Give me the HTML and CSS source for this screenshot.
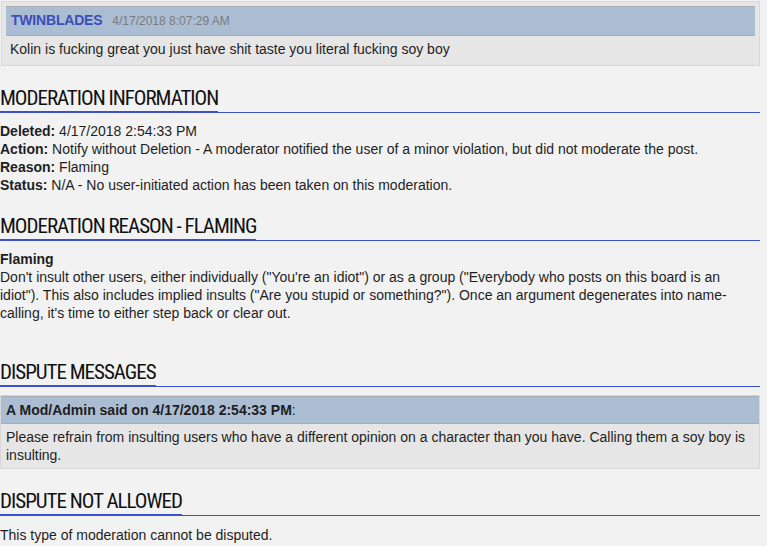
FILE: index.html
```html
<!DOCTYPE html>
<html lang="en">
<head>
<meta charset="utf-8">
<title>Moderation</title>
<link rel="stylesheet" href="styles.css">
</head>
<body>
<div class="page">
  <div class="post">
    <div class="post-head">
      <span class="post-user">TWINBLADES</span><span class="post-date">4/17/2018 8:07:29 AM</span>
    </div>
    <div class="post-body">Kolin is fucking great you just have shit taste you literal fucking soy boy</div>
  </div>

  <h2 class="section-title"><span>MODERATION INFORMATION</span></h2>
  <div class="section-text">
    <div><b>Deleted:</b> 4/17/2018 2:54:33 PM</div>
    <div><b>Action:</b> Notify without Deletion - A moderator notified the user of a minor violation, but did not moderate the post.</div>
    <div><b>Reason:</b> Flaming</div>
    <div><b>Status:</b> N/A - No user-initiated action has been taken on this moderation.</div>
  </div>

  <h2 class="section-title"><span>MODERATION REASON - FLAMING</span></h2>
  <div class="section-text reason">
    <div><b>Flaming</b></div>
    <div>Don't insult other users, either individually ("You're an idiot") or as a group ("Everybody who posts on this board is an idiot"). This also includes implied insults ("Are you stupid or something?"). Once an argument degenerates into name-calling, it's time to either step back or clear out.</div>
  </div>

  <h2 class="section-title"><span>DISPUTE MESSAGES</span></h2>
  <div class="dispute">
    <div class="dispute-head"><b>A Mod/Admin said on 4/17/2018 2:54:33 PM</b>:</div>
    <div class="dispute-body">Please refrain from insulting users who have a different opinion on a character than you have. Calling them a soy boy is insulting.</div>
  </div>

  <h2 class="section-title"><span>DISPUTE NOT ALLOWED</span></h2>
  <div class="section-text last">This type of moderation cannot be disputed.</div>
</div>
</body>
</html>
```
FILE: styles.css
```css
html, body {
  margin: 0;
  padding: 0;
  background: #f2f2f2;
}
body {
  font-family: "Liberation Sans", Arial, sans-serif;
  font-size: 14px;
  line-height: 18px;
  color: #1e1e1e;
}
.page {
  width: 760px;
  padding-top: 1px;
}
.post {
  margin-left: 1px;
  background: #e6e6e6;
  border: 1px solid #d8d8d8;
  padding: 4px 4px 3px;
}
.post-head {
  background: #abbdd3;
  border-top: 1px solid #a7acb2;
  border-bottom: 1px solid #a7acb2;
  padding: 4px 5px 5px;
}
.post-user {
  font-weight: bold;
  letter-spacing: -0.2px;
  color: #3c4dbb;
}
.post-date {
  margin-left: 10px;
  font-size: 12px;
  color: #7b7b7b;
}
.post-body {
  padding: 4px;
}
.section-title {
  display: flex;
  margin: 21px 0 0;
  border-bottom: 1px solid #3a50cc;
  font-family: "Roboto Condensed", Roboto, sans-serif;
  font-stretch: condensed;
  font-weight: normal;
  font-size: 21px;
  line-height: 22px;
  letter-spacing: -1px;
  color: #111;
}
.section-title span {
  padding-bottom: 2px;
  border-bottom: 2px solid #3a50cc;
  margin-bottom: -1px;
}
.section-text {
  margin-top: 9px;
}
.section-text.reason {
  padding-bottom: 18px;
}
.section-text.last {
  margin-top: 10px;
}
.dispute {
  margin-top: 8px;
  background: #e6e6e6;
  border: 1px solid #d8d8d8;
}
.dispute-head {
  background: #abbdd3;
  border-top: 1px solid #a7acb2;
  border-bottom: 1px solid #a7acb2;
  padding: 4px 5px;
}
.dispute-body {
  padding: 4px 5px;
}
```
